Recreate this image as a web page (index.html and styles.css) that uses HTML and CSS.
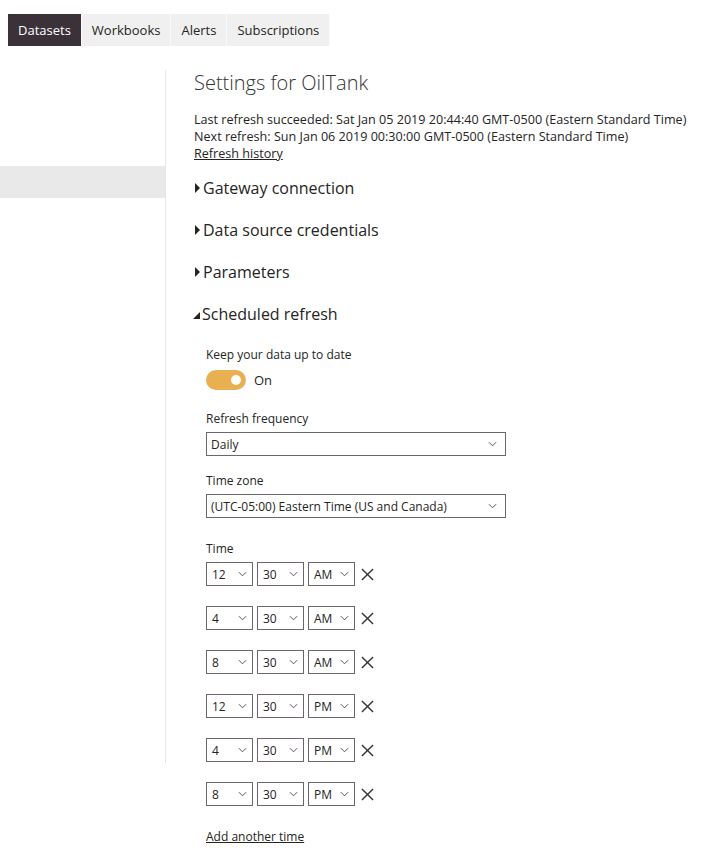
FILE: index.html
```html
<!DOCTYPE html>
<html>
<head>
<meta charset="utf-8">
<link rel="stylesheet" href="styles.css">
</head>
<body>
<nav class="tabs">
  <div class="tab active">Datasets</div>
  <div class="tab">Workbooks</div>
  <div class="tab">Alerts</div>
  <div class="tab">Subscriptions</div>
</nav>
<div class="layout">
  <aside class="sidebar">
    <div class="side-item"></div>
    <div class="side-item selected"></div>
  </aside>
  <main class="content">
    <h1 class="title">Settings for OilTank</h1>
    <div class="info">
      <div>Last refresh succeeded: Sat Jan 05 2019 20:44:40 GMT-0500 (Eastern Standard Time)</div>
      <div>Next refresh: Sun Jan 06 2019 00:30:00 GMT-0500 (Eastern Standard Time)</div>
      <div><a class="link">Refresh history</a></div>
    </div>
    <div class="sections">
      <div class="section"><span class="tri right"></span>Gateway connection</div>
      <div class="section"><span class="tri right"></span>Data source credentials</div>
      <div class="section"><span class="tri right"></span>Parameters</div>
      <div class="section"><span class="tri down"></span>Scheduled refresh</div>
    </div>
    <div class="panel">
      <div class="label">Keep your data up to date</div>
      <div class="toggle-row"><span class="toggle"><span class="knob"></span></span><span class="on">On</span></div>
      <div class="label mt">Refresh frequency</div>
      <div class="select wide"><span>Daily</span><svg class="chev" viewBox="0 0 10 6"><path d="M1 1 L5 5 L9 1" fill="none" stroke="#444"/></svg></div>
      <div class="label mt2">Time zone</div>
      <div class="select wide"><span>(UTC-05:00) Eastern Time (US and Canada)</span><svg class="chev" viewBox="0 0 10 6"><path d="M1 1 L5 5 L9 1" fill="none" stroke="#444"/></svg></div>
      <div class="label mt3">Time</div>
      <div class="times">
        <div class="trow"><div class="select sm"><span>12</span><svg class="chev" viewBox="0 0 10 6"><path d="M1 1 L5 5 L9 1" fill="none" stroke="#444"/></svg></div><div class="select sm"><span>30</span><svg class="chev" viewBox="0 0 10 6"><path d="M1 1 L5 5 L9 1" fill="none" stroke="#444"/></svg></div><div class="select sm"><span>AM</span><svg class="chev" viewBox="0 0 10 6"><path d="M1 1 L5 5 L9 1" fill="none" stroke="#444"/></svg></div><svg class="x" viewBox="0 0 14 14"><path d="M1 1 L13 13 M13 1 L1 13" stroke="#333" stroke-width="1.5"/></svg></div>
        <div class="trow"><div class="select sm"><span>4</span><svg class="chev" viewBox="0 0 10 6"><path d="M1 1 L5 5 L9 1" fill="none" stroke="#444"/></svg></div><div class="select sm"><span>30</span><svg class="chev" viewBox="0 0 10 6"><path d="M1 1 L5 5 L9 1" fill="none" stroke="#444"/></svg></div><div class="select sm"><span>AM</span><svg class="chev" viewBox="0 0 10 6"><path d="M1 1 L5 5 L9 1" fill="none" stroke="#444"/></svg></div><svg class="x" viewBox="0 0 14 14"><path d="M1 1 L13 13 M13 1 L1 13" stroke="#333" stroke-width="1.5"/></svg></div>
        <div class="trow"><div class="select sm"><span>8</span><svg class="chev" viewBox="0 0 10 6"><path d="M1 1 L5 5 L9 1" fill="none" stroke="#444"/></svg></div><div class="select sm"><span>30</span><svg class="chev" viewBox="0 0 10 6"><path d="M1 1 L5 5 L9 1" fill="none" stroke="#444"/></svg></div><div class="select sm"><span>AM</span><svg class="chev" viewBox="0 0 10 6"><path d="M1 1 L5 5 L9 1" fill="none" stroke="#444"/></svg></div><svg class="x" viewBox="0 0 14 14"><path d="M1 1 L13 13 M13 1 L1 13" stroke="#333" stroke-width="1.5"/></svg></div>
        <div class="trow"><div class="select sm"><span>12</span><svg class="chev" viewBox="0 0 10 6"><path d="M1 1 L5 5 L9 1" fill="none" stroke="#444"/></svg></div><div class="select sm"><span>30</span><svg class="chev" viewBox="0 0 10 6"><path d="M1 1 L5 5 L9 1" fill="none" stroke="#444"/></svg></div><div class="select sm"><span>PM</span><svg class="chev" viewBox="0 0 10 6"><path d="M1 1 L5 5 L9 1" fill="none" stroke="#444"/></svg></div><svg class="x" viewBox="0 0 14 14"><path d="M1 1 L13 13 M13 1 L1 13" stroke="#333" stroke-width="1.5"/></svg></div>
        <div class="trow"><div class="select sm"><span>4</span><svg class="chev" viewBox="0 0 10 6"><path d="M1 1 L5 5 L9 1" fill="none" stroke="#444"/></svg></div><div class="select sm"><span>30</span><svg class="chev" viewBox="0 0 10 6"><path d="M1 1 L5 5 L9 1" fill="none" stroke="#444"/></svg></div><div class="select sm"><span>PM</span><svg class="chev" viewBox="0 0 10 6"><path d="M1 1 L5 5 L9 1" fill="none" stroke="#444"/></svg></div><svg class="x" viewBox="0 0 14 14"><path d="M1 1 L13 13 M13 1 L1 13" stroke="#333" stroke-width="1.5"/></svg></div>
        <div class="trow"><div class="select sm"><span>8</span><svg class="chev" viewBox="0 0 10 6"><path d="M1 1 L5 5 L9 1" fill="none" stroke="#444"/></svg></div><div class="select sm"><span>30</span><svg class="chev" viewBox="0 0 10 6"><path d="M1 1 L5 5 L9 1" fill="none" stroke="#444"/></svg></div><div class="select sm"><span>PM</span><svg class="chev" viewBox="0 0 10 6"><path d="M1 1 L5 5 L9 1" fill="none" stroke="#444"/></svg></div><svg class="x" viewBox="0 0 14 14"><path d="M1 1 L13 13 M13 1 L1 13" stroke="#333" stroke-width="1.5"/></svg></div>
      </div>
      <div class="add"><a class="link">Add another time</a></div>
    </div>
  </main>
</div>
</body>
</html>
```
FILE: styles.css
```css
* { box-sizing: border-box; }
html, body { margin: 0; padding: 0; background: #fff; }
body {
  font-family: "Open Sans", "Noto Sans", sans-serif;
  color: #252423;
  font-size: 12px;
  width: 712px;
  height: 853px;
  overflow: hidden;
}
.tabs {
  display: flex;
  margin: 14px 0 0 8px;
  height: 32px;
}
.tab {
  background: #f0f0f0;
  padding: 0 10px;
  line-height: 32px;
  font-size: 13px;
  color: #252423;
  border-right: 1px solid #fafafa;
}
.tab.active { background: #3b3239; color: #fff; }
.layout {
  display: flex;
  margin-top: 24px;
}
.sidebar {
  width: 166px;
  flex-shrink: 0;
  border-right: 1px solid #e6e6e6;
  height: 693px;
}
.side-item { height: 96px; }
.side-item.selected { height: 32px; background: #e9e9e9; }
.content {
  padding-left: 28px;
}
.title {
  margin: 0;
  font-weight: 300;
  font-size: 20px;
  line-height: 26px;
  color: #333;
}
.info {
  margin-top: 15px;
  line-height: 17px;
  font-size: 12.6px;
}
.link { color: #252423; text-decoration: underline; }
.sections {
  margin-top: 15px;
  display: flex;
  flex-direction: column;
  gap: 20px;
}
.section {
  font-size: 16px;
  line-height: 22px;
  display: flex;
  align-items: center;
  color: #252423;
}
.tri { display: inline-block; width: 0; height: 0; margin-right: 3px; }
.tri.right { border-top: 5px solid transparent; border-bottom: 5px solid transparent; border-left: 5px solid #252423; margin-left: 1px; }
.tri.down { border-left: 7px solid transparent; border-bottom: 7px solid #252423; margin-left: -1px; margin-right: 2px; margin-top: 3px; }
.panel {
  padding-left: 12px;
  margin-top: 22px;
}
.label { line-height: 16px; }
.mt { margin-top: 21px; }
.mt2 { margin-top: 17px; }
.mt3 { margin-top: 23px; }
.toggle-row { display: flex; align-items: center; margin-top: 7px; height: 20px; }
.toggle {
  width: 40px; height: 20px; border-radius: 10px; background: #e9b051;
  display: flex; align-items: center; justify-content: flex-end; padding-right: 5px;
}
.knob { width: 10px; height: 10px; border-radius: 50%; background: #fff; }
.on { margin-left: 8px; font-size: 13px; }
.select {
  border: 1px solid #6f6570;
  height: 24px;
  display: flex;
  align-items: center;
  justify-content: space-between;
  padding: 0 8px 0 4px;
  background: #fff;
  margin-top: 5px;
}
.select.wide { width: 300px; }
.chev { width: 9px; height: 6px; }
.times { display: flex; flex-direction: column; gap: 20px; margin-top: 5px; }
.trow { display: flex; align-items: center; gap: 4px; }
.select.sm { width: 47px; margin-top: 0; padding: 0 5px 0 5px; }
.x { width: 13px; height: 13px; margin-left: 2px; }
.add { margin-top: 22px; }
```
